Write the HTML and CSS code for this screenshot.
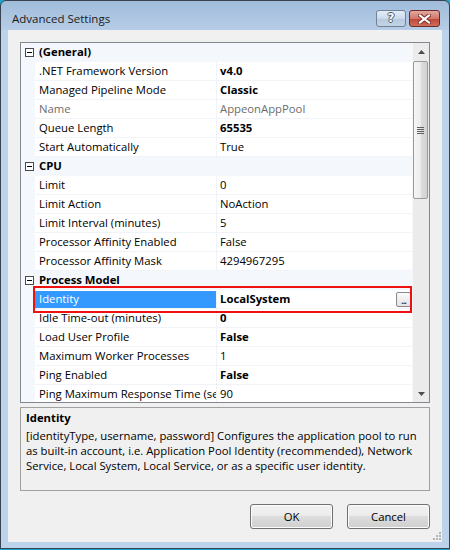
FILE: index.html
```html
<!DOCTYPE html>
<html>
<head>
<meta charset="utf-8">
<link rel="stylesheet" href="styles.css">
</head>
<body>
<div class="window">
  <div class="titlebar">
    <div class="title">Advanced Settings</div>
    <div class="capbtns">
      <div class="capbtn help">?</div>
      <div class="capbtn close">
        <svg width="13" height="10" viewBox="0 0 13 10"><path d="M2 1.5 L11 8.5 M11 1.5 L2 8.5" stroke="#7a2a22" stroke-width="4" stroke-linecap="square"/><path d="M2 1.5 L11 8.5 M11 1.5 L2 8.5" stroke="#fff" stroke-width="2.2" stroke-linecap="square"/></svg>
      </div>
    </div>
  </div>
  <div class="client">
    <div class="grid">
      <div class="rows">
        <div class="row cat"><span class="gut"><span class="exp"></span></span><span class="catlabel">(General)</span></div>
        <div class="row"><span class="gut"></span><span class="lbl">.NET Framework Version</span><span class="val b">v4.0</span></div>
        <div class="row"><span class="gut"></span><span class="lbl">Managed Pipeline Mode</span><span class="val b">Classic</span></div>
        <div class="row dis"><span class="gut"></span><span class="lbl">Name</span><span class="val">AppeonAppPool</span></div>
        <div class="row"><span class="gut"></span><span class="lbl">Queue Length</span><span class="val b">65535</span></div>
        <div class="row"><span class="gut"></span><span class="lbl">Start Automatically</span><span class="val">True</span></div>
        <div class="row cat"><span class="gut"><span class="exp"></span></span><span class="catlabel">CPU</span></div>
        <div class="row"><span class="gut"></span><span class="lbl">Limit</span><span class="val">0</span></div>
        <div class="row"><span class="gut"></span><span class="lbl">Limit Action</span><span class="val">NoAction</span></div>
        <div class="row"><span class="gut"></span><span class="lbl">Limit Interval (minutes)</span><span class="val">5</span></div>
        <div class="row"><span class="gut"></span><span class="lbl">Processor Affinity Enabled</span><span class="val">False</span></div>
        <div class="row"><span class="gut"></span><span class="lbl">Processor Affinity Mask</span><span class="val">4294967295</span></div>
        <div class="row cat"><span class="gut"><span class="exp"></span></span><span class="catlabel">Process Model</span></div>
        <div class="row sel"><span class="gut"></span><span class="lbl">Identity</span><span class="val b"><span class="valtext">LocalSystem</span><span class="dots">...</span></span></div>
        <div class="row"><span class="gut"></span><span class="lbl">Idle Time-out (minutes)</span><span class="val b">0</span></div>
        <div class="row"><span class="gut"></span><span class="lbl">Load User Profile</span><span class="val b">False</span></div>
        <div class="row"><span class="gut"></span><span class="lbl">Maximum Worker Processes</span><span class="val">1</span></div>
        <div class="row"><span class="gut"></span><span class="lbl">Ping Enabled</span><span class="val b">False</span></div>
        <div class="row"><span class="gut"></span><span class="lbl">Ping Maximum Response Time (seconds)</span><span class="val">90</span></div>
      </div>
      <div class="vscroll">
        <div class="sbbtn"><svg width="7" height="4" viewBox="0 0 7 4"><path d="M0 4 L3.5 0 L7 4 Z" fill="#4d4d4d"/></svg></div>
        <div class="track">
          <div class="thumb">
            <svg width="7" height="7" viewBox="0 0 7 7"><path d="M0 0.5H7M0 2.5H7M0 4.5H7M0 6.5H7" stroke="#5e5e5e" stroke-width="1"/></svg>
          </div>
        </div>
        <div class="sbbtn"><svg width="7" height="4" viewBox="0 0 7 4"><path d="M0 0 L7 0 L3.5 4 Z" fill="#4d4d4d"/></svg></div>
      </div>
    </div>
    <div class="desc">
      <div class="desctitle">Identity</div>
      <div class="desctext">[identityType, username, password] Configures the application pool to run<br>as built-in account, i.e. Application Pool Identity (recommended), Network<br>Service, Local System, Local Service, or as a specific user identity.</div>
    </div>
    <div class="actions">
      <div class="btn">OK</div>
      <div class="btn">Cancel</div>
    </div>
    <svg class="grip" width="8" height="8" viewBox="0 0 8 8"><g fill="#b5b5b5"><rect x="6" y="0" width="2" height="2"/><rect x="3" y="3" width="2" height="2"/><rect x="6" y="3" width="2" height="2"/><rect x="0" y="6" width="2" height="2"/><rect x="3" y="6" width="2" height="2"/><rect x="6" y="6" width="2" height="2"/></g></svg>
  </div>
</div>
<div class="markbox"></div>
</body>
</html>
```
FILE: styles.css
```css
html, body {
  margin: 0;
  padding: 0;
}
body {
  width: 450px;
  height: 550px;
  background: #1fa3cf;
  position: relative;
  overflow: hidden;
  font-family: "Open Sans", "Noto Sans", sans-serif;
  font-size: 11.3px;
  color: #000;
}
.window {
  box-sizing: border-box;
  width: 450px;
  height: 549px;
  border: 1px solid #39434f;
  border-radius: 6px 6px 0 0;
  background: linear-gradient(#a0bcda 0px, #b6cce6 28px, #bdd3eb 30px);
  padding: 0 7px 6px 7px;
  display: flex;
  flex-direction: column;
}
.titlebar {
  height: 29px;
  display: flex;
  justify-content: space-between;
  align-items: flex-start;
}
.title {
  padding: 10px 0 0 4px;
  font-size: 11.5px;
  color: #1b1b1b;
  line-height: 16px;
}
.capbtns {
  display: flex;
  gap: 3px;
  margin: 9px 2px 0 0;
}
.capbtn {
  box-sizing: border-box;
  height: 17px;
  border-radius: 3px;
  display: flex;
  align-items: center;
  justify-content: center;
}
.help {
  width: 30px;
  border: 1px solid #6f8297;
  background: linear-gradient(#e4edf7 0%, #cbdaea 50%, #b6c9de 51%, #c3d4e6 100%);
  color: #fff;
  font-family: "DejaVu Sans", sans-serif;
  font-weight: bold;
  font-size: 12px;
  line-height: 15px;
  text-shadow: 1px 0 0 #4c5a6a, -1px 0 0 #4c5a6a, 0 1px 0 #4c5a6a, 0 -1px 0 #4c5a6a;
}
.close {
  width: 31px;
  border: 1px solid #6b2c27;
  background: linear-gradient(#e3a89e 0%, #d2776b 50%, #c04434 51%, #cf6d5c 100%);
}
.client {
  box-sizing: border-box;
  height: 512px;
  background: #f0f0f0;
  padding: 12px 12px 0 12px;
  display: flex;
  flex-direction: column;
  position: relative;
}
.grid {
  box-sizing: border-box;
  height: 361px;
  border: 1px solid #828790;
  background: #fff;
  display: flex;
}
.rows {
  flex: 1;
  overflow: hidden;
}
.row {
  display: grid;
  grid-template-columns: 14px 182px 1fr;
  height: 19px;
  line-height: 18px;
  white-space: nowrap;
}
.gut {
  background: #f4f7fc;
  display: flex;
  align-items: center;
  justify-content: center;
}
.lbl {
  box-sizing: border-box;
  padding-left: 4px;
  border-right: 1px solid #f0f3f8;
  border-bottom: 1px solid #f0f3f8;
  overflow: hidden;
  text-overflow: clip;
}
.val {
  padding-left: 3px;
  border-bottom: 1px solid #f0f3f8;
  overflow: hidden;
}
.b {
  font-weight: bold;
}
.dis {
  color: #6d6d6d;
}
.row.cat {
  display: flex;
  background: #f4f7fc;
  font-weight: bold;
}
.row.cat .gut {
  width: 14px;
}
.catlabel {
  padding-left: 4px;
}
.exp {
  box-sizing: border-box;
  width: 9px;
  height: 9px;
  border: 1px solid #4a4a4a;
  background: #fff;
  position: relative;
  margin-left: 2px;
}
.exp::after {
  content: "";
  position: absolute;
  left: 1px;
  top: 3px;
  width: 5px;
  height: 1px;
  background: #000;
}
.sel .lbl {
  background: #3399ff;
  color: #fff;
  border-top: 1px solid #fff;
  line-height: 16px;
}
.sel .val {
  display: flex;
  justify-content: space-between;
  align-items: center;
}
.dots {
  box-sizing: border-box;
  width: 15px;
  height: 15px;
  margin-right: 1px;
  border: 1px solid #8a8a8a;
  border-radius: 2px;
  background: linear-gradient(#fbfbfb, #e3e3e3);
  font-weight: normal;
  font-size: 10px;
  line-height: 14px;
  text-align: center;
  letter-spacing: -1px;
}
.vscroll {
  width: 17px;
  display: flex;
  flex-direction: column;
  background: #ebebeb;
  border-left: 1px solid #f7f7f7;
  box-sizing: border-box;
}
.sbbtn {
  height: 17px;
  display: flex;
  align-items: center;
  justify-content: center;
}
.track {
  flex: 1;
  padding-top: 1px;
}
.thumb {
  box-sizing: border-box;
  width: 15px;
  height: 138px;
  border: 1px solid #9a9a9a;
  border-radius: 2px;
  background: linear-gradient(to right, #f5f5f5, #ececec 50%, #dcdcdc 51%, #d2d2d2);
  display: flex;
  align-items: center;
  justify-content: center;
}
.desc {
  box-sizing: border-box;
  height: 84px;
  margin-top: 4px;
  border: 1px solid #a0a0a0;
  padding: 2px 0 0 5px;
  line-height: 15px;
}
.desctitle {
  font-weight: bold;
  margin-bottom: 3px;
}
.actions {
  display: flex;
  justify-content: flex-end;
  gap: 14px;
  margin-top: 13px;
}
.btn {
  box-sizing: border-box;
  width: 83px;
  height: 25px;
  border: 1px solid #707070;
  border-radius: 3px;
  background: linear-gradient(#f2f2f2 0%, #ebebeb 49%, #dddddd 50%, #cfcfcf 100%);
  box-shadow: inset 0 0 0 1px #fcfcfc;
  display: flex;
  align-items: center;
  justify-content: center;
}
.grip {
  position: absolute;
  right: 1px;
  bottom: 2px;
}
.markbox {
  position: absolute;
  left: 33px;
  top: 286px;
  width: 379px;
  height: 27px;
  box-sizing: border-box;
  border: 2px solid #f01010;
}
```
